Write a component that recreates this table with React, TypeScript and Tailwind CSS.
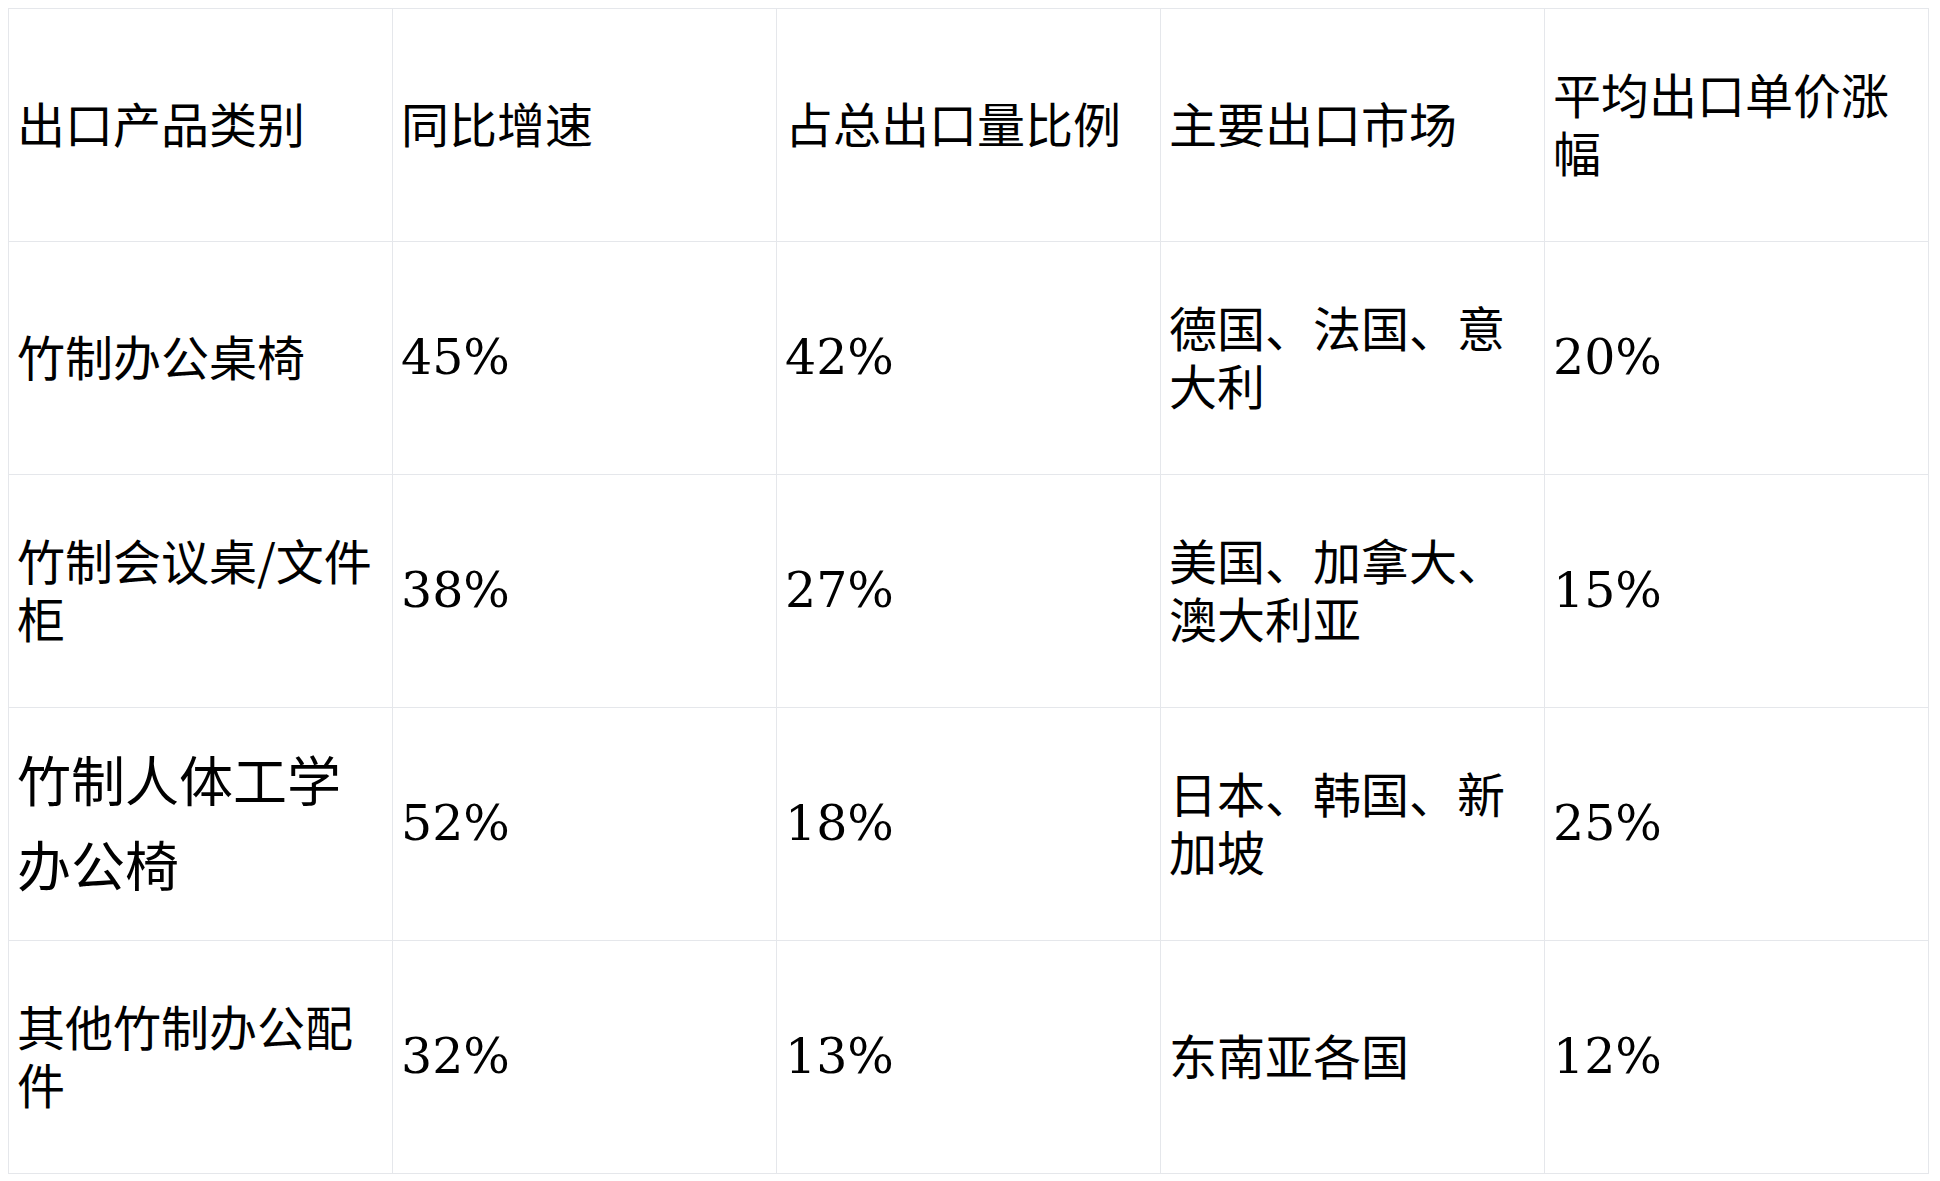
import React from "react";

const cjk = "font-['Noto_Sans_CJK_SC',sans-serif] text-[48px] leading-[58px] pb-[6px]";
const num = "font-['DejaVu_Serif',serif] text-[49px] leading-[58px]";

type Cell = { t: string; kind: "cjk" | "num" | "big" };

const header: string[] = ["出口产品类别", "同比增速", "占总出口量比例", "主要出口市场", "平均出口单价涨幅"];

const rows: Cell[][] = [
  [
    { t: "竹制办公桌椅", kind: "cjk" },
    { t: "45%", kind: "num" },
    { t: "42%", kind: "num" },
    { t: "德国、法国、意大利", kind: "cjk" },
    { t: "20%", kind: "num" },
  ],
  [
    { t: "竹制会议桌/文件柜", kind: "cjk" },
    { t: "38%", kind: "num" },
    { t: "27%", kind: "num" },
    { t: "美国、加拿大、澳大利亚", kind: "cjk" },
    { t: "15%", kind: "num" },
  ],
  [
    { t: "竹制人体工学办公椅", kind: "big" },
    { t: "52%", kind: "num" },
    { t: "18%", kind: "num" },
    { t: "日本、韩国、新加坡", kind: "cjk" },
    { t: "25%", kind: "num" },
  ],
  [
    { t: "其他竹制办公配件", kind: "cjk" },
    { t: "32%", kind: "num" },
    { t: "13%", kind: "num" },
    { t: "东南亚各国", kind: "cjk" },
    { t: "12%", kind: "num" },
  ],
];

function cls(kind: Cell["kind"]) {
  if (kind === "num") return num;
  if (kind === "big") return "font-['Noto_Sans_CJK_SC',sans-serif] text-[54px] leading-[85px] pb-[6px]";
  return cjk;
}

export default function App() {
  return (
    <div className="bg-white min-h-[1181px] pt-2 pl-2 text-black">
      <table className="table-fixed border-collapse w-[1920px]">
        <colgroup>
          <col className="w-[384px]" />
          <col className="w-[384px]" />
          <col className="w-[384px]" />
          <col className="w-[384px]" />
          <col className="w-[384px]" />
        </colgroup>
        <tbody>
          <tr className="h-[233px]">
            {header.map((h) => (
              <td key={h} className={`border border-[#e5e7eb] px-2 align-middle text-left font-normal ${cjk}`}>
                {h}
              </td>
            ))}
          </tr>
          {rows.map((r, i) => (
            <tr key={i} className="h-[233px]">
              {r.map((c, j) => (
                <td key={j} className={`border border-[#e5e7eb] px-2 align-middle text-left ${cls(c.kind)}`}>
                  {c.t}
                </td>
              ))}
            </tr>
          ))}
        </tbody>
      </table>
    </div>
  );
}
